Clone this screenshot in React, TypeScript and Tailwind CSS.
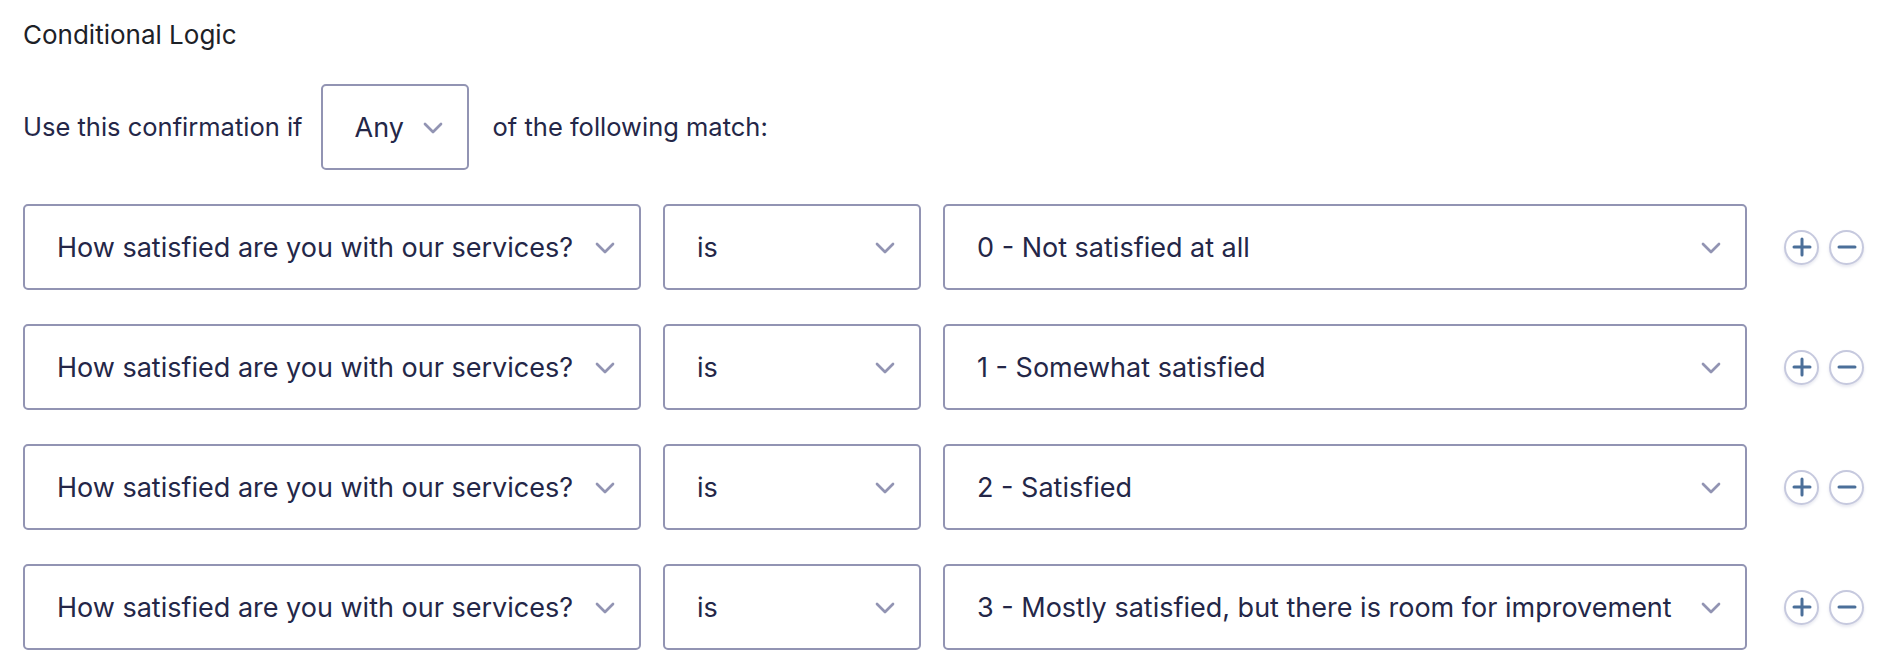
import React from "react";

const Chevron = () => (
  <svg width="20" height="12" viewBox="0 0 20 12" fill="none" className="shrink-0">
    <path d="M2 2 L10 10 L18 2" stroke="#9294b3" strokeWidth="2.7" strokeLinecap="round" strokeLinejoin="round" />
  </svg>
);

const Select = ({ label, w }: { label: string; w: string }) => (
  <div
    className={`${w} h-[86px] shrink-0 flex items-center justify-between border-2 border-[#9294b3] rounded-[5px] bg-white pl-[32px] pr-[24px] pt-[2px] text-[27px]`}
  >
    <span className="whitespace-nowrap">{label}</span>
    <Chevron />
  </div>
);

const CircleBtn = ({ plus }: { plus?: boolean }) => (
  <div className="w-[35px] h-[35px] rounded-full border-2 border-[#c6c9de] bg-white shadow-[0_2px_3px_rgba(120,125,170,0.18)] flex items-center justify-center">
    <svg width="20" height="20" viewBox="0 0 20 20">
      <path d="M2 10 H18" stroke="#4b6f99" strokeWidth="3" strokeLinecap="round" />
      {plus && <path d="M10 2 V18" stroke="#4b6f99" strokeWidth="3" strokeLinecap="round" />}
    </svg>
  </div>
);

const values = [
  "0 - Not satisfied at all",
  "1 - Somewhat satisfied",
  "2 - Satisfied",
  "3 - Mostly satisfied, but there is room for improvement",
];

export default function App() {
  return (
    <div
      className="w-[1884px] h-[672px] bg-white pl-[23px] pt-[20px] text-[25.5px] text-[#242748]"
      style={{ fontFamily: "Inter, 'Noto Sans', sans-serif" }}
    >
      <div className="h-[30px] leading-[30px] text-[26px] font-normal text-[#1d2127]">Conditional Logic</div>
      <div className="mt-[34px] flex items-center">
        <span>Use this confirmation if</span>
        <div className="ml-[18px] mr-[24px] w-[148px] h-[86px] flex items-center justify-between border-2 border-[#9294b3] rounded-[5px] pl-[32px] pr-[24px] pt-[2px] text-[27px]">
          <span>Any</span>
          <Chevron />
        </div>
        <span>of the following match:</span>
      </div>
      <div className="mt-[34px] flex flex-col gap-[34px]">
        {values.map((v) => (
          <div key={v} className="flex items-center gap-[22px]">
            <Select label="How satisfied are you with our services?" w="w-[618px]" />
            <Select label="is" w="w-[258px]" />
            <Select label={v} w="w-[804px]" />
            <div className="ml-[15px] flex items-center gap-[10px]">
              <CircleBtn plus />
              <CircleBtn />
            </div>
          </div>
        ))}
      </div>
    </div>
  );
}
